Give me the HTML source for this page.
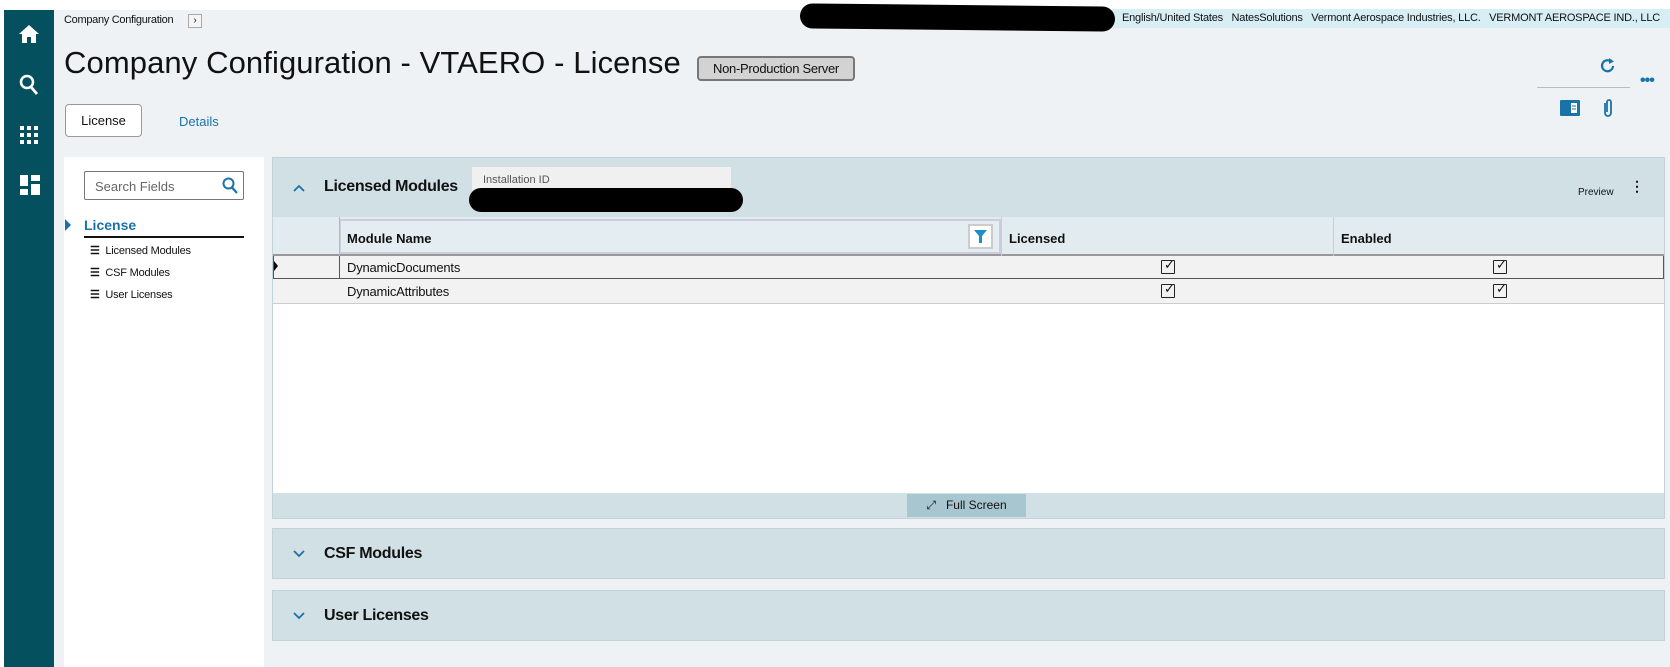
<!DOCTYPE html>
<html><head><meta charset="utf-8"><style>
*{box-sizing:border-box;margin:0;padding:0}
body{width:1670px;height:667px;overflow:hidden;background:#fff;font-family:"Liberation Sans",sans-serif;position:relative;color:#111}
.a{position:absolute}
.side{left:4px;top:10px;width:50px;height:657px;background:#05505f}
.main{left:54px;top:10px;width:1616px;height:657px;background:#eef2f5}
.t{font-size:12px;white-space:nowrap}
.panel{background:#d1e0e5;border:1px solid #c3d2d8}
.chk{width:14px;height:14px;border:1.6px solid #222;border-radius:1px}
</style></head><body>
<div class="a side"></div>
<div class="a main"></div>
<svg class="a" style="left:18px;top:24px" width="22" height="20" viewBox="0 0 22 20"><path d="M11 1 L21 10 H18 V19 H13 V13 H9 V19 H4 V10 H1 Z" fill="#fff"/></svg>
<svg class="a" style="left:19px;top:74px" width="20" height="22" viewBox="0 0 20 22"><circle cx="8" cy="8" r="6" stroke="#fff" stroke-width="2.5" fill="none"/><path d="M12 13 L18 20" stroke="#fff" stroke-width="2.8"/></svg>
<svg class="a" style="left:20px;top:126px" width="18" height="18" viewBox="0 0 18 18" fill="#fff"><rect x="0" y="0" width="4" height="4"/><rect x="7" y="0" width="4" height="4"/><rect x="14" y="0" width="4" height="4"/><rect x="0" y="7" width="4" height="4"/><rect x="7" y="7" width="4" height="4"/><rect x="14" y="7" width="4" height="4"/><rect x="0" y="14" width="4" height="4"/><rect x="7" y="14" width="4" height="4"/><rect x="14" y="14" width="4" height="4"/></svg>
<svg class="a" style="left:20px;top:175px" width="20" height="20" viewBox="0 0 20 20" fill="#fff"><rect x="0" y="0" width="8" height="11"/><rect x="11" y="0" width="9" height="6"/><rect x="11" y="9" width="9" height="11"/><rect x="0" y="14" width="8" height="6"/></svg>
<div class="a" style="left:1112px;top:9px;width:558px;height:19px;background:#d6eef4"></div>
<div class="a t" style="left:1122px;top:12px;font-size:11px;letter-spacing:-0.2px">English/United States&nbsp;&nbsp;&nbsp;NatesSolutions&nbsp;&nbsp;&nbsp;Vermont Aerospace Industries, LLC.&nbsp;&nbsp;&nbsp;VERMONT AEROSPACE IND., LLC</div>
<div class="a" style="left:800px;top:5px;width:315px;height:25px;background:#000;border-radius:14px;transform:rotate(0.6deg)"></div>
<div class="a t" style="left:64px;top:14px;font-size:11px;letter-spacing:-0.3px">Company Configuration</div>
<div class="a" style="left:188px;top:14px;width:14px;height:14px;border:1px solid #aaa;background:#f5f5f5;font-size:10px;text-align:center;line-height:12px">›</div>
<div class="a t" style="left:64px;top:45px;font-size:31px;letter-spacing:0.1px">Company Configuration - VTAERO - License</div>
<div class="a t" style="left:697px;top:56px;width:158px;height:25px;background:#d3d3d3;border:2px solid #777;border-radius:4px;font-size:13px;text-align:center;line-height:21px;letter-spacing:-0.3px">Non-Production Server</div>
<div class="a t" style="left:65px;top:104px;width:77px;height:33px;background:#fff;border:1px solid #999;border-radius:4px;font-size:13px;text-align:center;line-height:31px">License</div>
<div class="a t" style="left:179px;top:114px;font-size:13px;color:#1a73a8">Details</div>
<svg class="a" style="left:1600px;top:57px" width="16" height="17" viewBox="0 0 16 17"><path d="M13 9 A5.5 5.5 0 1 1 11 4.5" stroke="#1a73a8" stroke-width="2.2" fill="none"/><path d="M9 1 L14 4.5 L9 7 Z" fill="#1a73a8"/></svg>
<div class="a" style="left:1537px;top:87px;width:93px;height:1px;background:#bbb"></div>
<div class="a t" style="left:1640px;top:72px;font-size:16px;font-weight:bold;color:#1a73a8;letter-spacing:-1px">•••</div>
<svg class="a" style="left:1560px;top:100px" width="20" height="16" viewBox="0 0 20 16"><rect x="0" y="0" width="20" height="16" rx="1" fill="#1a73a8"/><rect x="11" y="3" width="6" height="10" fill="#fff"/><path d="M12 6h4M12 9h4" stroke="#1a73a8"/></svg>
<svg class="a" style="left:1602px;top:98px" width="12" height="20" viewBox="0 0 12 20"><path d="M3 5 V15 A3 3 0 0 0 9 15 V4 A2 2 0 0 0 5 4 V14" stroke="#1a73a8" stroke-width="1.8" fill="none"/></svg>
<div class="a" style="left:64px;top:157px;width:200px;height:510px;background:#fff"></div>
<div class="a t" style="left:84px;top:171px;width:160px;height:29px;border:1px solid #777;border-radius:2px;padding:7px 10px;font-size:13px;color:#666">Search Fields</div>
<svg class="a" style="left:222px;top:177px" width="16" height="17" viewBox="0 0 16 17"><circle cx="6.5" cy="6.5" r="5" stroke="#1a73a8" stroke-width="2" fill="none"/><path d="M10 10.5 L15 16" stroke="#1a73a8" stroke-width="2.2"/></svg>
<div class="a" style="left:65px;top:219px;border-left:6px solid #1a73a8;border-top:6px solid transparent;border-bottom:6px solid transparent"></div>
<div class="a t" style="left:84px;top:217px;font-size:14px;color:#1a73a8;font-weight:bold">License</div>
<div class="a" style="left:84px;top:236px;width:160px;height:1.5px;background:#111"></div>
<div class="a t" style="left:90px;top:240px;font-size:11px;line-height:22px;letter-spacing:-0.2px"><b>☰</b>&nbsp;&nbsp;Licensed Modules<br><b>☰</b>&nbsp;&nbsp;CSF Modules<br><b>☰</b>&nbsp;&nbsp;User Licenses</div>
<div class="a panel" style="left:272px;top:157px;width:1393px;height:362px"></div>
<svg class="a" style="left:293px;top:184px" width="12" height="8" viewBox="0 0 12 8"><path d="M1 7 L6 2 L11 7" stroke="#1a73a8" stroke-width="1.8" fill="none"/></svg>
<div class="a t" style="left:324px;top:178px;font-size:16px;font-weight:bold;letter-spacing:-0.3px">Licensed Modules</div>
<div class="a" style="left:472px;top:167px;width:259px;height:23px;background:#f0f0f0"></div>
<div class="a t" style="left:483px;top:174px;font-size:11px;color:#555">Installation ID</div>
<div class="a" style="left:469px;top:188px;width:274px;height:24px;background:#000;border-radius:12px"></div>
<div class="a t" style="left:1578px;top:187px;font-size:10px">Preview</div>
<div class="a t" style="left:1630px;top:178px;font-size:14px;font-weight:bold">⋮</div>
<div class="a" style="left:273px;top:217px;width:1391px;height:276px;background:#fff"></div>
<div class="a" style="left:273px;top:217px;width:1391px;height:39px;background:#e2ecf0;border-bottom:2px solid #999"></div>
<div class="a" style="left:339px;top:219px;width:662px;height:35px;border:2px solid #ccd;background:#e4eef2"></div>
<div class="a" style="left:1001px;top:217px;width:1px;height:87px;background:#ccc"></div>
<div class="a" style="left:1333px;top:217px;width:1px;height:87px;background:#ccc"></div>
<div class="a" style="left:339px;top:217px;width:1px;height:87px;background:#bbb"></div>
<div class="a t" style="left:347px;top:231px;font-size:13px;font-weight:bold">Module Name</div>
<div class="a" style="left:968px;top:224px;width:25px;height:25px;border:2px solid #ccc;background:#fff"></div>
<svg class="a" style="left:974px;top:230px" width="13" height="13" viewBox="0 0 13 13"><path d="M0 0 H13 L8 6 V13 H5 V6 Z" fill="#1a8fc8"/></svg>
<div class="a t" style="left:1009px;top:231px;font-size:13px;font-weight:bold">Licensed</div>
<div class="a t" style="left:1341px;top:231px;font-size:13px;font-weight:bold">Enabled</div>
<div class="a" style="left:273px;top:256px;width:1391px;height:48px;background:#f2f2f2"></div>
<div class="a" style="left:273px;top:256px;width:1391px;height:23px;border:1px solid #555;border-top:none"></div>
<div class="a" style="left:339px;top:256px;width:1px;height:23px;background:#555"></div>
<div class="a" style="left:273px;top:303px;width:1391px;height:1px;background:#ccc"></div>
<div class="a" style="left:274px;top:261px;border-left:4px solid #000;border-top:5px solid transparent;border-bottom:5px solid transparent"></div>
<div class="a t" style="left:347px;top:260px;font-size:13px;letter-spacing:-0.2px">DynamicDocuments</div>
<div class="a t" style="left:347px;top:284px;font-size:13px;letter-spacing:-0.2px">DynamicAttributes</div>
<div class="a chk" style="left:1161px;top:260px"></div><div class="a chk" style="left:1493px;top:260px"></div>
<div class="a chk" style="left:1161px;top:284px"></div><div class="a chk" style="left:1493px;top:284px"></div>
<div class="a t" style="left:1164px;top:257px;font-size:13px">✓</div><div class="a t" style="left:1496px;top:257px;font-size:13px">✓</div>
<div class="a t" style="left:1164px;top:281px;font-size:13px">✓</div><div class="a t" style="left:1496px;top:281px;font-size:13px">✓</div>
<div class="a t" style="left:907px;top:494px;width:119px;height:23px;background:#a8c6d0;font-size:12px;line-height:23px;text-align:center">⤢&nbsp;&nbsp; Full Screen</div>
<div class="a panel" style="left:272px;top:528px;width:1393px;height:51px"></div>
<svg class="a" style="left:293px;top:550px" width="12" height="8" viewBox="0 0 12 8"><path d="M1 1 L6 6 L11 1" stroke="#1a73a8" stroke-width="1.8" fill="none"/></svg>
<div class="a t" style="left:324px;top:545px;font-size:16px;font-weight:bold;letter-spacing:-0.3px">CSF Modules</div>
<div class="a panel" style="left:272px;top:590px;width:1393px;height:51px"></div>
<svg class="a" style="left:293px;top:612px" width="12" height="8" viewBox="0 0 12 8"><path d="M1 1 L6 6 L11 1" stroke="#1a73a8" stroke-width="1.8" fill="none"/></svg>
<div class="a t" style="left:324px;top:607px;font-size:16px;font-weight:bold;letter-spacing:-0.3px">User Licenses</div>
</body></html>
